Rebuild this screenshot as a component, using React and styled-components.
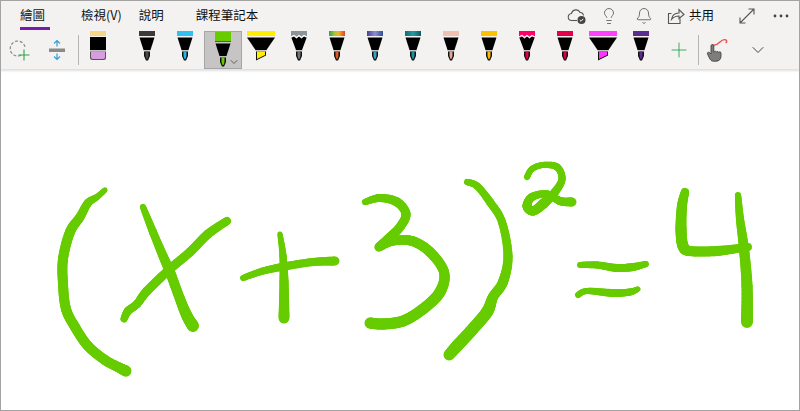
import React from "react";
import styled, { createGlobalStyle } from "styled-components";
import { Bell, ChevronDown, Lightbulb, Plus } from "lucide-react";

const GlobalStyle = createGlobalStyle`
  html, body {
    margin: 0;
    padding: 0;
    background: #fff;
    font-family: "Noto Sans CJK TC", "Noto Sans", sans-serif;
  }
`;

const Page = styled.div`
  width: 800px;
  height: 411px;
  box-sizing: border-box;
  border: 1px solid #a3a3a3;
  display: flex;
  flex-direction: column;
  overflow: hidden;
  background: #fff;
`;

const Ribbon = styled.header`
  height: 68px;
  flex: none;
  background: #f3f2f1;
  box-shadow: 0 1px 2px 1px rgba(0, 0, 0, 0.13);
  position: relative;
  z-index: 1;
`;

const TabRow = styled.div`
  height: 30px;
  display: flex;
  align-items: flex-start;
  padding-left: 19px;
`;

const Tab = styled.div`
  height: 29px;
  box-sizing: border-box;
  min-width: ${(p) => (p.$active ? "30px" : "0")};
  margin-right: ${(p) => p.$gap}px;
  padding-top: 4px;
  font-size: 12.5px;
  line-height: 19px;
  color: #111;
  border-bottom: 3px solid ${(p) => (p.$active ? "#7719aa" : "transparent")};
`;

const TopActions = styled.div`
  margin-left: auto;
  display: flex;
  align-items: center;
  height: 30px;
  color: #555;
`;

const TopIcon = styled.div`
  width: ${(p) => p.$w}px;
  height: 26px;
  margin-right: ${(p) => p.$gap || 0}px;
  display: flex;
  align-items: center;
  justify-content: center;
`;

const ShareLabel = styled.span`
  font-size: 12.5px;
  line-height: 19px;
  color: #111;
  margin-right: 21px;
  position: relative;
  top: -2px;
`;

const ToolRow = styled.div`
  height: 38px;
  display: flex;
  align-items: flex-start;
`;

const ToolSlot = styled.div`
  width: ${(p) => p.$w || 38}px;
  height: 38px;
  flex: none;
  margin-left: ${(p) => p.$gap || 0}px;
  display: flex;
  justify-content: center;
  align-items: ${(p) => (p.$center ? "center" : "flex-start")};
`;

const Separator = styled.div`
  width: 1px;
  height: 30px;
  margin: 4px 0 0 ${(p) => p.$gap || 0}px;
  flex: none;
  background: #b5b5b5;
`;

const SelectedSlot = styled.div`
  width: 38px;
  height: 38px;
  flex: none;
  box-sizing: border-box;
  background: #c6c5c3;
  border: 1px solid #a6a6a6;
  display: flex;
  justify-content: center;
  position: relative;
`;

const SlotChevron = styled.span`
  position: absolute;
  right: 1px;
  bottom: 0;
  display: flex;
  color: #333;
`;

const Canvas = styled.svg`
  display: block;
  width: 798px;
  height: 340px;
  flex: none;
`;

/* band gradients for the textured pens */
const PenDefs = () => (
  <svg width="0" height="0" style={{ position: "absolute" }}>
    <defs>
      <linearGradient id="rainbow">
        <stop offset="0" stopColor="#2f9e5b" />
        <stop offset="0.35" stopColor="#a8c832" />
        <stop offset="0.6" stopColor="#f2b32a" />
        <stop offset="1" stopColor="#d8442a" />
      </linearGradient>
      <linearGradient id="galaxy">
        <stop offset="0" stopColor="#4a3f8f" />
        <stop offset="0.5" stopColor="#8c8fd0" />
        <stop offset="1" stopColor="#2d4f96" />
      </linearGradient>
      <linearGradient id="teal">
        <stop offset="0" stopColor="#0f6d78" />
        <stop offset="0.5" stopColor="#2a98a0" />
        <stop offset="1" stopColor="#0c5a66" />
      </linearGradient>
    </defs>
  </svg>
);

function Pen({ band, tip, zigzag, selected }) {
  const bandH = selected ? 10 : 5;
  const y = selected ? 5 : 0;
  return (
    <svg width="26" height="36" viewBox="0 0 26 36">
      <rect x="5" y="0" width="16" height={bandH} fill={band} />
      {selected && <rect x="5" y="9" width="16" height="1" fill="#3f6b12" />}
      {zigzag ? (
        <>
          <rect x="5" y="5" width="16" height="2" fill={band} />
          <polygon
            points="5.5,7 8,5.5 10.5,7.5 13,5.5 15.5,7.5 18,5.5 20.5,7 16,19 10,19"
            fill="#000"
          />
          <polyline
            points="5,6 8,4.5 10.5,6.5 13,4.5 15.5,6.5 18,4.5 21,6"
            fill="none"
            stroke="#fff"
            strokeWidth="1.3"
          />
        </>
      ) : (
        <polygon
          points={`5.5,${y + 6.5} 20.5,${y + 6.5} 16.5,${y + 19} 9.5,${y + 19}`}
          fill="#000"
        />
      )}
      <rect x="9.5" y={y + 19.2} width="7" height="1" fill="#b9b9b9" />
      <polygon
        points={`10,${y + 20.5} 16,${y + 20.5} 16,${y + 25} 14,${y + 29.5} 12,${y + 29.5} 10,${y + 25}`}
        fill="#111"
      />
      <polygon
        points={`11.5,${y + 20.5} 14.5,${y + 20.5} 14.5,${y + 25} 13.5,${y + 28} 12.5,${y + 28} 11.5,${y + 25}`}
        fill={tip}
      />
    </svg>
  );
}

function Highlighter({ band, tip }) {
  return (
    <svg width="30" height="36" viewBox="0 0 30 36">
      <rect x="1" y="0" width="28" height="5" fill={band} />
      <polygon points="1,6.5 29,6.5 20.5,19 9.5,19" fill="#000" />
      <rect x="9.5" y="19.2" width="11" height="1" fill="#b9b9b9" />
      <polygon points="10,20.5 20,20.5 20,24.5 10,29.5" fill="#111" />
      <polygon points="11,20.5 19,20.5 19,24 11,28" fill={tip} />
    </svg>
  );
}

function Eraser() {
  return (
    <svg width="26" height="36" viewBox="0 0 26 36">
      <rect x="5" y="0" width="16" height="5" fill="#f6d58b" />
      <rect x="5" y="6" width="16" height="13" fill="#000" />
      <rect x="5" y="19.2" width="16" height="1" fill="#b9b9b9" />
      <path d="M5 20.5h16v6a2.5 2.5 0 0 1-2.5 2.5h-11A2.5 2.5 0 0 1 5 26.5z" fill="#555" />
      <path d="M6 20.5h14v5.5a2 2 0 0 1-2 2H8a2 2 0 0 1-2-2z" fill="#d89ce0" />
    </svg>
  );
}

function LassoIcon() {
  return (
    <svg width="24" height="24" viewBox="0 0 24 24">
      <path
        d="M12 17.300A7.500 7.500 0 1 1 16.200 10"
        fill="none"
        stroke="#8a8a8a"
        strokeWidth="1.2"
        strokeDasharray="3 1.800"
      />
      <path d="M15 11.500v11M9.500 17h11" stroke="#2fa34d" strokeWidth="1.1" fill="none" />
    </svg>
  );
}

function InsertSpaceIcon() {
  return (
    <svg width="20" height="22" viewBox="0 0 20 22">
      <rect x="2" y="9.500" width="16" height="3.500" fill="#8a8a8a" />
      <path
        d="M10 1.500v6M7 4.500l3-3 3 3M10 14.500v6M7 17.500l3 3 3-3"
        fill="none"
        stroke="#2f9fd8"
        strokeWidth="1.2"
      />
    </svg>
  );
}

function TouchInkIcon() {
  return (
    <svg width="24" height="28" viewBox="0 0 24 28">
      <path
        d="M8 9c3 1 6-1 8-3 2-2 4-3 6-2 1 .6 1 2-.4 3"
        fill="none"
        stroke="#e8504f"
        strokeWidth="1.4"
      />
      <path
        d="M7 10a1.400 1.400 0 0 1 2.800 0v6l1-.6a1.300 1.300 0 0 1 1.600.5l.6-.3a1.300 1.300 0 0 1 1.600.6l.5-.2a1.400 1.400 0 0 1 1.900 1.200v3c0 3-2 5-5 5H9.500c-2 0-3-1-4-3L3.500 18c-.7-1.200 1-2.500 2-1.500L7 18z"
        fill="#7d7d7d"
        stroke="#444"
        strokeWidth="0.9"
      />
    </svg>
  );
}

function CloudCheckIcon() {
  return (
    <svg width="20" height="20" viewBox="0 0 20 20">
      <path
        d="M5 14.500a3.500 3.500 0 0 1-.5-7A4.500 4.500 0 0 1 13 6.500a3.200 3.200 0 0 1 3.500 3"
        fill="none"
        stroke="#555"
        strokeWidth="1.1"
      />
      <path d="M5 14.500h5" stroke="#555" strokeWidth="1.1" />
      <circle cx="14.500" cy="14" r="4" fill="#444" />
      <path d="M12.700 14l1.300 1.300 2.300-2.500" fill="none" stroke="#fff" strokeWidth="1" />
    </svg>
  );
}

function ShareIcon() {
  return (
    <svg width="18" height="18" viewBox="0 0 18 18">
      <path d="M4.500 6.500H1.500v10h11.500v-5" fill="none" stroke="#555" strokeWidth="1.1" />
      <path
        d="M4.500 12.500c.5-4 3.500-6.500 7.500-6.500V2.500l5 5-5 4V9c-3 0-5.500 1-7.500 3.500z"
        fill="none"
        stroke="#555"
        strokeWidth="1.1"
      />
    </svg>
  );
}

function ExpandIcon() {
  return (
    <svg width="16" height="16" viewBox="0 0 16 16">
      <path
        d="M1 15L15 1M9.500 1H15v5.500M1 9.500V15h5.500"
        fill="none"
        stroke="#555"
        strokeWidth="1.1"
      />
    </svg>
  );
}

function MoreIcon() {
  return (
    <svg width="16" height="4" viewBox="0 0 16 4">
      <circle cx="2" cy="2" r="1.400" fill="#444" />
      <circle cx="8" cy="2" r="1.400" fill="#444" />
      <circle cx="14" cy="2" r="1.400" fill="#444" />
    </svg>
  );
}

// smooth a list of [x, y, width] points and draw it as short round segments
function InkStroke({ points }) {
  const segments = [];
  let prev = null;
  for (let i = 0; i < points.length - 1; i++) {
    const p0 = points[Math.max(i - 1, 0)];
    const p1 = points[i];
    const p2 = points[i + 1];
    const p3 = points[Math.min(i + 2, points.length - 1)];
    for (let s = 0; s <= 10; s++) {
      const t = s / 10;
      const at = (k) =>
        0.5 *
        (2 * p1[k] +
          (p2[k] - p0[k]) * t +
          (2 * p0[k] - 5 * p1[k] + 4 * p2[k] - p3[k]) * t * t +
          (3 * p1[k] - p0[k] - 3 * p2[k] + p3[k]) * t * t * t);
      const cur = [at(0), at(1), p1[2] + (p2[2] - p1[2]) * t];
      if (prev) segments.push([prev, cur]);
      prev = cur;
    }
  }
  return (
    <g stroke="#66cc00" strokeLinecap="round" fill="none">
      {segments.map(([a, b], i) => (
        <line key={i} x1={a[0]} y1={a[1]} x2={b[0]} y2={b[1]} strokeWidth={b[2]} />
      ))}
    </g>
  );
}

const strokes = [
  // (
  [[105, 191, 5], [97, 198, 6], [88, 204, 8], [80, 218, 9], [70, 233, 10], [63, 260, 10], [63, 285, 10], [66, 310, 10], [75, 328, 10], [88, 347, 10], [105, 361, 10], [118, 368, 10], [126, 372, 11]],
  // x
  [[143, 208, 6], [153, 233, 8], [163, 257, 9], [170, 273, 10], [180, 300, 10], [187, 317, 11], [193, 327, 12]],
  [[227, 222, 8], [208, 235, 9], [190, 253, 9], [170, 270, 9], [147, 292, 9], [137, 305, 8], [128, 312, 8], [124, 320, 7]],
  // +
  [[243, 279, 6], [263, 272, 7], [287, 267, 8], [313, 263, 8], [335, 262, 9]],
  [[280, 235, 5], [283, 257, 7], [284, 283, 9], [284, 319, 11]],
  // 3
  [[365, 203, 6], [380, 199, 8], [397, 203, 9], [406, 215, 9], [400, 228, 9], [390, 238, 9], [379, 248, 9]],
  [[379, 248, 9], [393, 242, 9], [412, 242, 10], [430, 253, 10], [444, 273, 10], [440, 293, 11], [423, 310, 11], [403, 322, 11], [383, 325, 11], [370, 324, 11]],
  // )
  [[467, 183, 6], [477, 187, 7], [490, 203, 8], [502, 223, 8], [508, 257, 9], [503, 283, 10], [493, 298, 10], [487, 313, 12], [470, 333, 12], [457, 347, 12], [449, 356, 11]],
  // 2
  [[527, 178, 6], [532, 170, 6], [543, 166, 6], [557, 168, 7], [562, 180, 7], [555, 193, 8], [543, 205, 10], [533, 212, 9], [527, 207, 9], [532, 198, 8], [547, 195, 7], [560, 202, 8], [572, 203, 9]],
  // =
  [[580, 266, 6], [597, 266, 7], [617, 269, 8], [633, 268, 8], [646, 265, 6]],
  [[578, 296, 6], [587, 292, 6], [613, 294, 8], [630, 293, 7], [638, 290, 5]],
  // 4
  [[685, 193, 8], [682, 207, 10], [681, 230, 11], [683, 247, 11], [690, 252, 10], [717, 252, 10], [748, 248, 8]],
  [[738, 196, 6], [740, 220, 8], [744, 250, 10], [747, 287, 11], [747, 323, 12]],
];

const pensBefore = [
  { band: "#3a3a3a", tip: "#4a4a4a" },
  { band: "#2fc0f0", tip: "#27b5e0" },
];

const pensAfter = [
  { band: "#8d9499", tip: "#6d7478", zigzag: true },
  { band: "url(#rainbow)", tip: "#d8562a" },
  { band: "url(#galaxy)", tip: "#35a3c0" },
  { band: "url(#teal)", tip: "#1d8f9c" },
  { band: "#f0c0b0", tip: "#e0a890" },
  { band: "#ffc000", tip: "#ffb900" },
  { band: "#ff0066", tip: "#e6004c", zigzag: true },
  { band: "#e6004c", tip: "#d9003f" },
];

export default function App() {
  return (
    <Page>
      <GlobalStyle />
      <PenDefs />
      <Ribbon>
        <TabRow>
          <Tab $active $gap={31}>繪圖</Tab>
          <Tab $gap={17}>檢視(V)</Tab>
          <Tab $gap={32}>說明</Tab>
          <Tab $gap={0}>課程筆記本</Tab>
          <TopActions>
            <TopIcon $w={22} $gap={11}><CloudCheckIcon /></TopIcon>
            <TopIcon $w={20} $gap={15}><Lightbulb size={18} strokeWidth={1.1} /></TopIcon>
            <TopIcon $w={20} $gap={12}><Bell size={18} strokeWidth={1.1} /></TopIcon>
            <TopIcon $w={20} $gap={3}><ShareIcon /></TopIcon>
            <ShareLabel>共用</ShareLabel>
            <TopIcon $w={24} $gap={12}><ExpandIcon /></TopIcon>
            <TopIcon $w={20} $gap={8}><MoreIcon /></TopIcon>
          </TopActions>
        </TabRow>
        <ToolRow>
          <ToolSlot $w={40} $center><LassoIcon /></ToolSlot>
          <ToolSlot $w={32} $center><InsertSpaceIcon /></ToolSlot>
          <Separator $gap={5} />
          <ToolSlot><Eraser /></ToolSlot>
          {pensBefore.map((pen, i) => (
            <ToolSlot key={i} $gap={i === 0 ? 11 : 0}><Pen {...pen} /></ToolSlot>
          ))}
          <SelectedSlot>
            <Pen band="#66cc00" tip="#66cc00" selected />
            <SlotChevron><ChevronDown size={12} strokeWidth={1.4} /></SlotChevron>
          </SelectedSlot>
          <ToolSlot><Highlighter band="#ffee00" tip="#ffee00" /></ToolSlot>
          {pensAfter.map((pen, i) => (
            <ToolSlot key={i}><Pen {...pen} /></ToolSlot>
          ))}
          <ToolSlot><Highlighter band="#ff40ff" tip="#ff33ff" /></ToolSlot>
          <ToolSlot><Pen band="#5c2d91" tip="#5c2d91" /></ToolSlot>
          <ToolSlot $center><Plus size={24} strokeWidth={0.9} color="#2fa34d" /></ToolSlot>
          <Separator />
          <ToolSlot $w={34} $center><TouchInkIcon /></ToolSlot>
          <ToolSlot $w={50} $center><ChevronDown size={20} strokeWidth={1.2} color="#444" /></ToolSlot>
        </ToolRow>
      </Ribbon>
      <Canvas viewBox="1 70 798 340">
        {strokes.map((points, i) => (
          <InkStroke key={i} points={points} />
        ))}
      </Canvas>
    </Page>
  );
}
